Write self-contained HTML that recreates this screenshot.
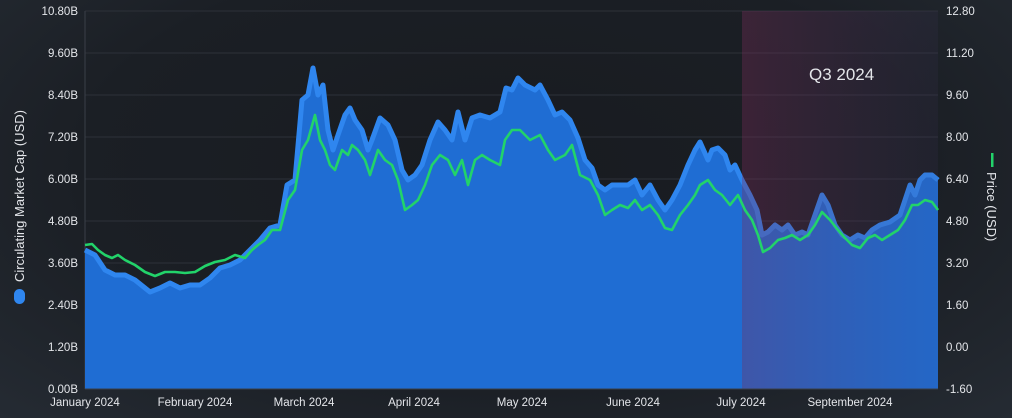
<!DOCTYPE html>
<html><head><meta charset="utf-8"><style>
html,body{margin:0;padding:0}
body{width:1012px;height:418px;overflow:hidden;background:radial-gradient(ellipse at 50% 40%,#181b20 0%,#1b1f25 60%,#252b33 100%);font-family:"Liberation Sans",sans-serif}
svg{position:absolute;left:0;top:0}
text{fill:#e4e6ea;font-size:11.5px;font-family:"Liberation Sans",sans-serif}
</style></head><body>
<svg width="1012" height="418" viewBox="0 0 1012 418">
<defs>
<linearGradient id="q3" x1="0" x2="1" y1="0" y2="0">
<stop offset="0" stop-color="#7a2c5a" stop-opacity="0.35"/>
<stop offset="1" stop-color="#4a3a6a" stop-opacity="0.12"/>
</linearGradient>
</defs>
<g stroke="#2d3139" stroke-width="1">
<line x1="85" x2="938" y1="11" y2="11"/><line x1="85" x2="938" y1="53" y2="53"/><line x1="85" x2="938" y1="95" y2="95"/><line x1="85" x2="938" y1="137" y2="137"/><line x1="85" x2="938" y1="179" y2="179"/><line x1="85" x2="938" y1="221" y2="221"/><line x1="85" x2="938" y1="263" y2="263"/><line x1="85" x2="938" y1="305" y2="305"/><line x1="85" x2="938" y1="347" y2="347"/>
</g>
<line x1="85" x2="85" y1="11" y2="389" stroke="#3a3f48"/>
<path fill="#1f6dd3" d="M85,389 L85,250 L95,255 L105,270 L115,275 L125,275 L135,280 L150,292 L160,288 L170,283 L180,288 L190,285 L200,285 L210,278 L220,268 L230,265 L240,260 L250,250 L260,240 L270,228 L280,225 L287,185 L295,180 L302,100 L308,95 L313,68 L318,95 L323,85 L328,130 L333,150 L338,135 L345,115 L350,108 L355,120 L362,130 L368,150 L372,140 L380,118 L388,125 L395,140 L402,170 L408,180 L415,175 L422,165 L430,140 L438,122 L445,130 L452,140 L458,112 L465,140 L472,118 L480,115 L490,118 L500,112 L506,88 L512,90 L518,78 L525,85 L535,90 L540,85 L548,100 L555,115 L562,112 L570,120 L578,138 L585,160 L592,168 L598,185 L605,190 L612,185 L620,185 L628,185 L635,180 L642,195 L650,185 L658,200 L665,210 L672,200 L680,185 L688,165 L695,150 L700,142 L708,160 L712,150 L718,148 L725,155 L730,170 L735,165 L742,180 L750,195 L757,210 L762,235 L768,232 L775,225 L782,230 L788,225 L795,235 L802,232 L808,235 L815,215 L822,195 L828,205 L835,225 L842,235 L850,240 L858,235 L865,238 L872,230 L880,225 L890,222 L900,215 L905,200 L910,185 L915,195 L920,180 L925,175 L932,175 L938,180 L938,389 Z"/>
<path fill="none" stroke="#2f86ef" stroke-width="5" stroke-linejoin="round" d="M85,250 L95,255 L105,270 L115,275 L125,275 L135,280 L150,292 L160,288 L170,283 L180,288 L190,285 L200,285 L210,278 L220,268 L230,265 L240,260 L250,250 L260,240 L270,228 L280,225 L287,185 L295,180 L302,100 L308,95 L313,68 L318,95 L323,85 L328,130 L333,150 L338,135 L345,115 L350,108 L355,120 L362,130 L368,150 L372,140 L380,118 L388,125 L395,140 L402,170 L408,180 L415,175 L422,165 L430,140 L438,122 L445,130 L452,140 L458,112 L465,140 L472,118 L480,115 L490,118 L500,112 L506,88 L512,90 L518,78 L525,85 L535,90 L540,85 L548,100 L555,115 L562,112 L570,120 L578,138 L585,160 L592,168 L598,185 L605,190 L612,185 L620,185 L628,185 L635,180 L642,195 L650,185 L658,200 L665,210 L672,200 L680,185 L688,165 L695,150 L700,142 L708,160 L712,150 L718,148 L725,155 L730,170 L735,165 L742,180 L750,195 L757,210 L762,235 L768,232 L775,225 L782,230 L788,225 L795,235 L802,232 L808,235 L815,215 L822,195 L828,205 L835,225 L842,235 L850,240 L858,235 L865,238 L872,230 L880,225 L890,222 L900,215 L905,200 L910,185 L915,195 L920,180 L925,175 L932,175 L938,180"/>
<rect x="742" y="11" width="196" height="378" fill="url(#q3)"/>
<path fill="none" stroke="#22d36a" stroke-width="2.6" stroke-linejoin="round" d="M85,245 L92,244 L98,250 L105,255 L112,258 L118,255 L125,260 L135,265 L145,272 L155,276 L165,272 L175,272 L185,273 L195,272 L205,266 L215,262 L225,260 L235,255 L245,258 L252,250 L258,245 L265,240 L272,230 L280,230 L288,200 L295,190 L302,150 L308,140 L315,115 L320,140 L325,150 L330,165 L335,170 L342,150 L348,155 L352,145 L358,150 L365,160 L370,175 L378,150 L385,160 L392,165 L398,180 L405,210 L412,205 L418,200 L425,185 L432,165 L440,155 L448,160 L455,175 L462,160 L468,185 L475,160 L482,155 L490,160 L500,165 L505,140 L512,130 L520,130 L530,140 L540,135 L548,150 L555,160 L565,155 L572,145 L580,175 L590,180 L598,195 L605,215 L612,210 L620,205 L628,208 L635,200 L642,210 L650,205 L658,215 L665,228 L672,230 L680,215 L688,205 L695,195 L700,185 L708,180 L715,190 L722,195 L730,205 L738,195 L745,210 L752,220 L758,235 L763,252 L770,248 L778,240 L785,238 L792,235 L800,240 L808,235 L815,225 L822,212 L830,220 L838,230 L845,238 L852,245 L860,248 L868,238 L875,235 L882,240 L890,235 L898,230 L905,220 L912,205 L918,205 L925,200 L932,202 L938,210"/>
<line x1="85" x2="938" y1="389" y2="389" stroke="#3a3f48"/>
<text x="809" y="80" style="font-size:17px">Q3 2024</text>
<g text-anchor="end">
<text x="78" y="15">10.80B</text><text x="78" y="57">9.60B</text><text x="78" y="99">8.40B</text><text x="78" y="141">7.20B</text><text x="78" y="183">6.00B</text><text x="78" y="225">4.80B</text><text x="78" y="267">3.60B</text><text x="78" y="309">2.40B</text><text x="78" y="351">1.20B</text><text x="78" y="393">0.00B</text>
</g>
<g>
<text x="946" y="15">12.80</text><text x="946" y="57">11.20</text><text x="946" y="99">9.60</text><text x="946" y="141">8.00</text><text x="946" y="183">6.40</text><text x="946" y="225">4.80</text><text x="946" y="267">3.20</text><text x="946" y="309">1.60</text><text x="946" y="351">0.00</text><text x="946" y="393">-1.60</text>
</g>
<g text-anchor="middle">
<text x="85" y="406">January 2024</text><text x="195" y="406">February 2024</text><text x="304" y="406">March 2024</text><text x="414" y="406">April 2024</text><text x="522" y="406">May 2024</text><text x="633" y="406">June 2024</text><text x="741" y="406">July 2024</text><text x="850" y="406">September 2024</text>
</g>
<rect x="14" y="289" width="11" height="15" rx="5.5" fill="#2f86ef"/>
<text transform="translate(24,282) rotate(-90)" style="font-size:13px">Circulating Market Cap (USD)</text>
<rect x="991" y="153" width="2.5" height="14" fill="#22d36a"/>
<text transform="translate(987,172) rotate(90)" style="font-size:13px">Price (USD)</text>
</svg>
</body></html>
